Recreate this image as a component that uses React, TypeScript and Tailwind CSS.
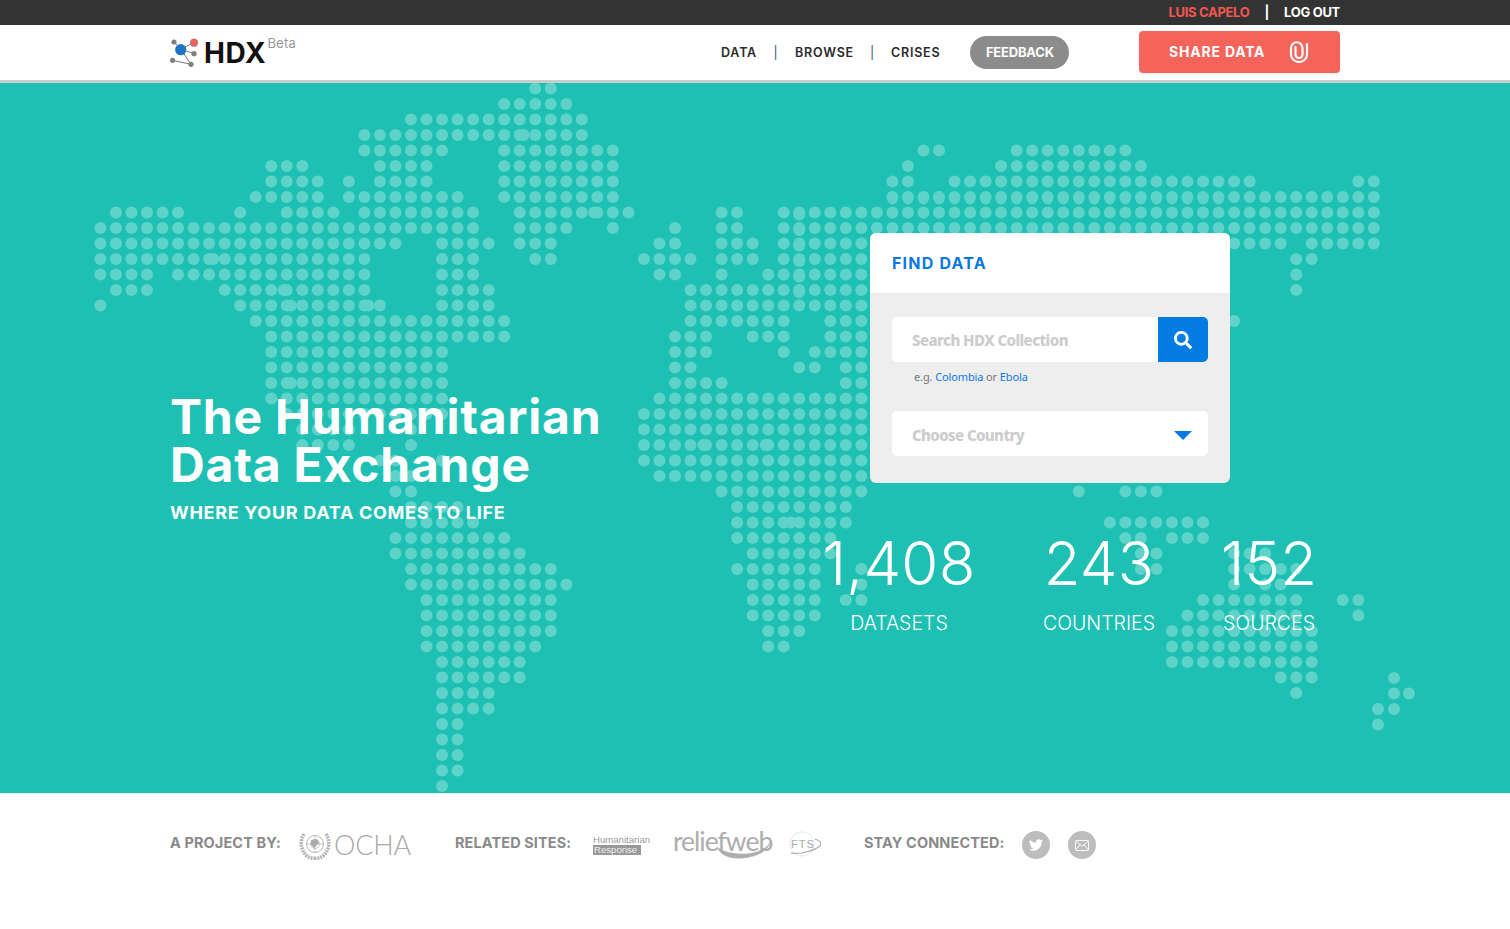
import { FaSearch, FaTwitter } from "react-icons/fa";

const MAP_ROWS = [
  "28-29",
  "26-30",
  "20-31",
  "17-31",
  "17-22 26-33 53-54 59-66",
  "11-13 18-21 26-33 52 58-67",
  "11-14 16 18-21 26-33 51-52 55-74 81-82",
  "10-14 16-23 26-33 51-82",
  "1-5 9 12-15 17-24 27-34 40-41 44-82",
  "0-24 27-30 33 37 40-41 44-82",
  "0-19 22-25 27-29 36-37 40-42 44-76 78-82",
  "0-17 22-24 28-29 35-38 40-42 44-49 77-78",
  "0-3 5-17 22-24 36-37 40 43-49 77",
  "1-3 8-17 22-25 38-49 77",
  "0 9-18 22-25 38-49",
  "10-26 38-44 47-49 73",
  "11-26 37-39 42-44 47-49",
  "11-22 37-39 44 46-49",
  "11-22 37-38 45-46 48-49",
  "11-22 37-40 48-49",
  "11-22 36-49",
  "12-22 35-49",
  "13-16 20 35-49",
  "13-16 20 35-49",
  "18-19 22 35-49",
  "19-20 36-49",
  "19-20 40-49 63 66-68",
  "20-23 41-48",
  "20-24 41-48 65-71",
  "19-26 41-47 66-67 69-71",
  "19-27 42-47 67-68 73-75",
  "20-29 41-46 49 67-68 73-77",
  "20-30 42-46 49 73 75-76",
  "21-29 42-46 48-49 71-77 80-81",
  "21-29 42-46 70-77 81",
  "21-29 43-45 69-78",
  "21-28 43-44 69-78",
  "22-27 69-78",
  "22-27 76-78",
  "22-25 77",
  "22-25",
  "22-23",
  "22-23",
  "22-23",
  "22-23",
  "22",
];

// the islands sit off the grid
const ISLANDS = [
  [1394, 595],
  [1394, 610.5],
  [1409, 610.5],
  [1378, 626],
  [1394, 626],
  [1378, 641.5],
];

// a few dots in the source image run into each other
const BLOBS = [
  [3, 27, 4, 0],
  [8, 32, -3, 0],
  [11, 7, 4, 0],
  [13, 12, -3, 0],
  [14, 12, 4, 0],
  [14, 17, 4, 0],
  [19, 12, 4, 0],
  [8, 45, 0, 2],
  [9, 45, 0, 2],
  [10, 45, 0, 2],
  [11, 45, 0, 2],
  [12, 45, 0, 2],
  [13, 45, 0, 2],
  [23, 38, 13, 0],
  [23, 42, 13, 0],
  [28, 44, 7, 0],
];

function parseRow(row: string) {
  const cols: number[] = [];
  row.split(" ").forEach((part) => {
    const [start, end] = part.split("-").map(Number);
    for (let col = start; col <= (end ?? start); col++) cols.push(col);
  });
  return cols;
}

function WorldMap() {
  const cx = (col: number) => 100.4 + 15.53 * col;
  const cy = (row: number) => 5.5 + 15.5 * row;

  return (
    <svg className="absolute inset-0" width="1510" height="710" fill="#5fd3c9">
      {MAP_ROWS.map((row, j) =>
        parseRow(row).map((col) => <circle key={`${j}-${col}`} cx={cx(col)} cy={cy(j)} r="6" />),
      )}
      {Array.from({ length: 22 }, (_, i) => (
        <circle key={i} cx={cx(51 + i)} cy={cy(7) + 2.5} r="5" />
      ))}
      {BLOBS.map(([j, col, dx, dy]) => (
        <circle key={`b${j}-${col}`} cx={cx(col) + dx} cy={cy(j) + dy} r="6" />
      ))}
      {ISLANDS.map(([x, y]) => (
        <circle key={`i${x}-${y}`} cx={x} cy={y} r="6" />
      ))}
    </svg>
  );
}

function HdxLogo() {
  return (
    <svg width="30" height="30" viewBox="0 0 30 30" className="shrink-0">
      <g stroke="#777" strokeWidth="1">
        <path d="M4 4 L10.7 11 L24 15.7 M10.7 11 L21 26.3 L2.3 22.3 M10.7 11 L24 4.7" fill="none" />
      </g>
      <circle cx="10.7" cy="11.7" r="5.6" fill="#1f74c4" />
      <circle cx="24" cy="4.7" r="3.9" fill="#ee5f5b" stroke="#888" strokeWidth="0.5" />
      <g fill="#808080">
        <circle cx="4" cy="4" r="2.6" />
        <circle cx="24" cy="15.7" r="2.6" />
        <circle cx="2.6" cy="22.3" r="2.6" />
        <circle cx="21" cy="26.3" r="2.6" />
      </g>
    </svg>
  );
}

function ClipIcon() {
  return (
    <svg width="20" height="22" viewBox="0 0 20 22" fill="none" stroke="#fff" strokeWidth="2.2" strokeLinecap="round">
      <path d="M18 3 V13.5 A8 7.5 0 0 1 2 13.5 V7 A5.5 5.5 0 0 1 13.5 7 V13.5 A3.5 3.5 0 0 1 6.5 13.5 V6" />
    </svg>
  );
}

function UnEmblem() {
  return (
    <svg width="32" height="30" viewBox="0 0 32 30" fill="none" stroke="#b5b5b5">
      <circle cx="16" cy="14" r="8.5" strokeWidth="1" />
      <circle cx="16" cy="14" r="4.5" strokeWidth="0.7" />
      <path d="M7.5 14 H24.5 M16 5.5 V22.5" strokeWidth="0.7" />
      <path d="M12 10 L18 9 L20 13 L15 18 L12 15 Z" fill="#aaa" stroke="none" />
      <path d="M5 4 C1 10 1 20 8 26 C12 28.5 14 28.5 16 28 M27 4 C31 10 31 20 24 26 C20 28.5 18 28.5 16 28" strokeWidth="3.6" strokeDasharray="2 0.8" />
    </svg>
  );
}

function ReliefWeb() {
  return (
    <div className="relative h-[30px] w-[99px]">
      <span className="absolute -top-[4px] left-0 font-['Lato',sans-serif] text-[26.5px] leading-[30px] tracking-[-1px] text-[#adadad]">
        reliefweb
      </span>
      <svg className="absolute inset-0" width="99" height="32" viewBox="0 0 99 32" fill="none" stroke="#adadad">
        <path d="M44 17 C48 27 60 29 70 28 C82 27 95 22 97 12 C95 19 82 24 70 24 C60 24 50 22 44 17 Z" fill="#adadad" strokeWidth="0.5" />
      </svg>
    </div>
  );
}

function FtsGlobe() {
  return (
    <div className="relative h-[28px] w-[33px]">
      <svg className="absolute inset-0" width="33" height="28" viewBox="0 0 33 28" fill="none" stroke="#d0d0d0">
        <circle cx="14" cy="13" r="12" strokeWidth="0.8" strokeDasharray="2 1.2" />
        <path d="M3 22 C12 24 30 19 33 13 C33 11 30 9 27 8" stroke="#a9a9a9" strokeWidth="1.2" />
      </svg>
      <span className="absolute left-[3px] top-[7px] font-['Liberation_Sans',sans-serif] text-[11px] leading-[13px] tracking-[1px] text-[#aaa]">
        FTS
      </span>
    </div>
  );
}

function Stat({ value, label, className }: { value: string; label: string; className: string }) {
  return (
    <div className={`flex flex-col items-center text-white ${className}`}>
      <span className="whitespace-nowrap font-['Inter',sans-serif] text-[60px] font-light leading-[70px] tracking-[0.2px]">{value}</span>
      <span className="mt-[13px] font-['Inter',sans-serif] text-[19.5px] font-light leading-[24px]">{label}</span>
    </div>
  );
}

function FooterLabel({ children, className }: { children: string; className: string }) {
  return <span className={`mb-[4px] text-[14.5px] font-bold tracking-[0.1px] text-[#8a8a8a] ${className}`}>{children}</span>;
}

export default function App() {
  return (
    <div className="font-['Inter',sans-serif]">
      <div className="h-[25px] bg-[#333333]">
        <div className="mx-auto flex h-full w-[1170px] items-center justify-end text-[13px] font-bold tracking-[-0.3px]">
          <span className="text-[#f5574f]">LUIS CAPELO</span>
          <span className="mx-[15px] text-white">|</span>
          <span className="text-white">LOG OUT</span>
        </div>
      </div>

      <header className="h-[58px] border-b-[3px] border-[#cccccc] bg-white">
        <div className="mx-auto flex h-[55px] w-[1170px] items-center">
          <div className="flex w-[551px] items-center">
            <HdxLogo />
            <span className="ml-[4px] pt-[1px] text-[28px] font-bold leading-[30px] tracking-[0.7px] text-[#111]">HDX</span>
            <span className="mb-[20px] ml-[1px] text-[13px] font-normal leading-[14px] tracking-[0.2px] text-[#9a9a9a]">Beta</span>
          </div>

          <nav className="flex items-center pt-[1px] text-[12.5px] font-semibold tracking-[0.8px] text-[#2b2b2b]">
            <span>DATA</span>
            <span className="mx-[16.5px] font-normal text-[#1d4f73]">|</span>
            <span>BROWSE</span>
            <span className="mx-[16px] font-normal text-[#1d4f73]">|</span>
            <span>CRISES</span>
          </nav>

          <button type="button" className="ml-[30px] h-[33px] w-[99px] rounded-full bg-[#8c8c8c] text-[13px] font-bold tracking-[-0.2px] text-white">
            FEEDBACK
          </button>

          <button type="button" className="-mt-[1px] ml-auto flex h-[42px] w-[201px] items-center rounded-[4px] bg-[#f5645a] pl-[30px] text-[14px] font-bold tracking-[0.8px] text-white">
            <span className="-mt-[1px]">SHARE DATA</span>
            <span className="ml-[24px]">
              <ClipIcon />
            </span>
          </button>
        </div>
      </header>

      <section className="relative h-[710px] overflow-hidden bg-[#1dc0b3]">
        <WorldMap />
        <div className="relative mx-auto flex w-[1170px]">
          <div className="w-[700px] pt-[310px] text-white">
            <h1 className="text-[48px] font-bold leading-[48px] tracking-[0.8px]">
              The Humanitarian
              <br />
              Data Exchange
            </h1>
            <p className="mt-[12px] text-[18px] font-bold leading-[24px] tracking-[0.7px]">WHERE YOUR DATA COMES TO LIFE</p>
          </div>

          <div className="w-[470px] pt-[150px]">
            <div className="w-[360px] overflow-hidden rounded-[6px] bg-[#eeeeee]">
              <div className="flex h-[60px] items-center bg-white px-[22px] text-[16px] font-bold tracking-[1.2px] text-[#0a79df]">FIND DATA</div>
              <div className="px-[22px] pb-[27px] pt-[24px] font-['Noto_Sans',sans-serif]">
                <div className="flex h-[45px] overflow-hidden rounded-[5px] bg-white">
                  <div className="flex flex-1 items-center pl-[20px] pt-[2px] text-[15px] font-extrabold tracking-[-0.55px] text-[#cccccc]">Search HDX Collection</div>
                  <div className="flex w-[50px] items-center justify-center bg-[#027ce2]">
                    <FaSearch size={18} color="#fff" />
                  </div>
                </div>
                <p className="mt-[7px] pl-[22px] text-[11px] leading-[16px] tracking-[-0.12px] text-[#777]">
                  e.g. <span className="text-[#0a79df]">Colombia</span> or <span className="text-[#0a79df]">Ebola</span>
                </p>
                <div className="mt-[26px] flex h-[45px] items-center justify-between rounded-[5px] bg-white pl-[20px] pr-[16px] pt-[4px]">
                  <span className="text-[15px] font-extrabold tracking-[-0.6px] text-[#cccccc]">Choose Country</span>
                  <span className="h-0 w-0 border-x-[9px] border-t-[9px] border-x-transparent border-t-[#027ce2]" />
                </div>
              </div>
            </div>

            <div className="-ml-[51px] mt-[45px] flex">
              <Stat value="1,408" label="DATASETS" className="w-[160px]" />
              <Stat value="243" label="COUNTRIES" className="ml-[65px] w-[110px]" />
              <Stat value="152" label="SOURCES" className="ml-[69px] w-[92px]" />
            </div>
          </div>
        </div>
      </section>

      <footer className="h-[136px] bg-white">
        <div className="mx-auto flex w-[1170px] items-center pt-[35px]">
          <FooterLabel className="w-[129px]">A PROJECT BY:</FooterLabel>
          <UnEmblem />
          <span className="ml-[3px] w-[121px] font-['Lato',sans-serif] text-[27px] font-light leading-[34px] tracking-[-0.2px] text-[#a8a8a8]">OCHA</span>
          <FooterLabel className="w-[138px]">RELATED SITES:</FooterLabel>
          <div className="flex w-[80px] flex-col font-['Liberation_Sans',sans-serif] text-[9.6px] leading-[10px] text-[#9a9a9a]">
            <span>Humanitarian</span>
            <span className="w-[48px] bg-[#999] pl-[1px] text-[#eee]">Response</span>
          </div>
          <ReliefWeb />
          <div className="ml-[16px] w-[76px]">
            <FtsGlobe />
          </div>
          <FooterLabel className="w-[158px]">STAY CONNECTED:</FooterLabel>
          <span className="flex h-[28px] w-[28px] items-center justify-center rounded-full bg-[#bdbdbd]">
            <FaTwitter size={14} color="#fff" />
          </span>
          <span className="ml-[18px] flex h-[28px] w-[28px] items-center justify-center rounded-full bg-[#bdbdbd]">
            <svg width="14" height="11" viewBox="0 0 14 11" fill="none" stroke="#fff" strokeWidth="0.9">
              <rect x="0.5" y="0.5" width="13" height="10" rx="1" />
              <path d="M0.5 1 L7 6 L13.5 1 M0.5 10 L5 5 M13.5 10 L9 5" />
            </svg>
          </span>
        </div>
      </footer>
    </div>
  );
}
